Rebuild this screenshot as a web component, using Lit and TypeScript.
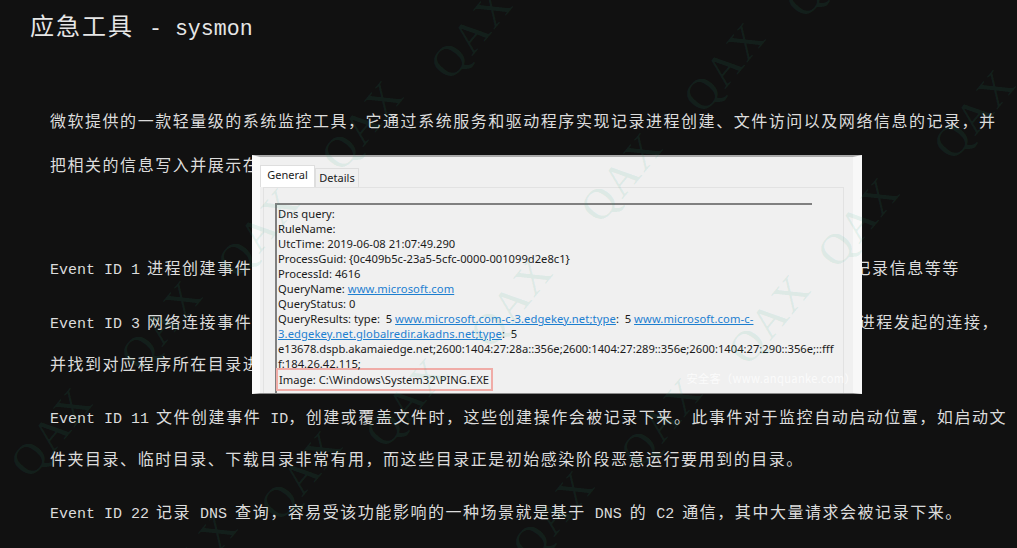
import { LitElement, html, css, svg } from "lit";
import { customElement } from "lit/decorators.js";

const MARKS: [number, number][] = [
  [475, 37], [366, 128], [262, 235], [165, 328], [55, 435], [200, 560],
  [305, 478], [410, 405], [515, 305], [625, 180], [728, 70], [830, -25],
  [978, 117], [862, 225], [773, 322], [665, 425], [557, 518],
];

@customElement("app-root")
export class AppRoot extends LitElement {
  static styles = css`
    :host {
      display: block;
      position: relative;
      height: 548px;
      overflow: hidden;
      background: #111111;
      color: #dcdcdc;
      font-family: "Noto Sans CJK SC", "Liberation Serif", serif;
      font-size: 16px;
      letter-spacing: 1.53px;
    }
    .l {
      font-family: "Liberation Mono", monospace;
      font-size: 15px;
      letter-spacing: 0;
      line-height: 0;
    }
    .tight {
      margin-right: -2px;
    }
    .snug {
      margin-right: -1px;
    }
    h1 {
      margin: 0 0 52px;
      padding: 4px 0 0 30px;
      font-size: 24px;
      font-weight: 400;
      line-height: 42px;
      letter-spacing: 2px;
      white-space: pre;
      color: #e6e6e6;
    }
    h1 .l {
      font-size: 21.6px;
      margin-left: 2px;
    }
    .body {
      padding-left: 50px;
    }
    p {
      margin: 0 0 11px;
      line-height: 42px;
      white-space: pre;
    }
    p.lead {
      line-height: 44px;
      margin-bottom: 60px;
    }
    p.first {
      margin-bottom: 12px;
    }
    .shot {
      position: absolute;
      left: 252px;
      top: 155px;
      width: 610px;
      height: 239px;
      box-sizing: border-box;
      background: #f0f0f0;
      border-top: 2px solid #a9a9a9;
      border-bottom: 1px solid #8a8a8a;
      border-left: 8px solid #fafafa;
      border-right: 9px solid #f8f8f8;
      color: #1a1a1a;
      font-family: "Noto Sans", "Liberation Sans", sans-serif;
      letter-spacing: 0;
      display: flex;
      flex-direction: column;
      overflow: hidden;
    }
    .tabs {
      display: flex;
      align-items: flex-end;
      height: 30px;
      flex: none;
      font-size: 11px;
    }
    .tab {
      box-sizing: border-box;
      height: 19px;
      width: 44px;
      padding-bottom: 2px;
      border: 1px solid #dedede;
      border-bottom: none;
      background: #f0f0f0;
      display: flex;
      align-items: center;
      justify-content: center;
    }
    .tab.on {
      height: 22px;
      width: 55px;
      padding-bottom: 4px;
      background: #ffffff;
    }
    .panel {
      flex: 1;
      margin: 0 9px 0 3px;
      border: 1px solid #e2e2e2;
      border-bottom: none;
      padding: 15px 31px 0 11px;
      min-height: 0;
    }
    .box {
      height: 100%;
      box-sizing: border-box;
      border-top: 2px solid #808080;
      border-left: 2px solid #808080;
      padding: 1px 0 0 1px;
      font-size: 11.2px;
      line-height: 15px;
      white-space: nowrap;
    }
    .link {
      color: #1d7fd0;
      letter-spacing: 0.12px;
      text-decoration: underline;
    }
    .img-line {
      margin: -3px 0 0 -2px;
      width: 217px;
      height: 23px;
      box-sizing: border-box;
      border: 2px solid #f0aca7;
      padding-left: 1px;
      line-height: 19px;
    }
    .credit {
      position: absolute;
      right: -3px;
      bottom: 7px;
      color: rgba(255, 255, 255, 0.75);
      font-family: "Noto Sans CJK SC", sans-serif;
      font-size: 11.2px;
      letter-spacing: 0.3px;
    }
    .marks {
      position: absolute;
      inset: 0;
      width: 100%;
      height: 100%;
      pointer-events: none;
    }
    .marks text {
      font-family: "Liberation Serif", serif;
      font-size: 44px;
      letter-spacing: 2px;
      fill: rgba(40, 170, 130, 0.1);
      text-anchor: middle;
      dominant-baseline: middle;
    }
  `;

  render() {
    return html`
      <h1>应急工具<span class="l"> - sysmon</span></h1>
      <div class="body">
        <p class="lead">微软提供的一款轻量级的系统监控工具，它通过系统服务和驱动程序实现记录进程创建、文件访问以及网络信息的记录，并
把相关的信息写入并展示在事件日志中</p>
        <p class="first"><span class="l tight">Event ID 1 </span>进程创建事件 ID，为新创建的进程提供扩展信息，包括完整命令行、文件哈希值、父进程等记录信息等等</p>
        <p><span class="l tight">Event ID 3 </span>网络连接事件 ID，记录计算机上的 TCP 和 UDP 连接，可以通过它定位到由恶意软件或可疑进程发起的连接，
并找到对应程序所在目录进行分析</p>
        <p><span class="l tight">Event ID 11 </span>文件创建事件<span class="l"> ID</span>，创建或覆盖文件时，这些创建操作会被记录下来。此事件对于监控自动启动位置，如启动文
件夹目录、临时目录、下载目录非常有用，而这些目录正是初始感染阶段恶意运行要用到的目录。</p>
        <p><span class="l tight">Event ID 22 </span>记录<span class="l snug"> DNS </span>查询，容易受该功能影响的一种场景就是基于<span class="l snug"> DNS </span>的<span class="l snug"> C2 </span>通信，其中大量请求会被记录下来。</p>
      </div>
      <div class="shot">
        <div class="tabs">
          <div class="tab on">General</div>
          <div class="tab">Details</div>
        </div>
        <div class="panel">
          <div class="box">
            <div>Dns query:</div>
            <div>RuleName:</div>
            <div>UtcTime: 2019-06-08 21:07:49.290</div>
            <div>ProcessGuid: {0c409b5c-23a5-5cfc-0000-001099d2e8c1}</div>
            <div>ProcessId: 4616</div>
            <div>QueryName: <span class="link">www.microsoft.com</span></div>
            <div>QueryStatus: 0</div>
            <div>QueryResults: type:&nbsp; 5 <span class="link">www.microsoft.com-c-3.edgekey.net;type</span>:&nbsp; 5 <span class="link">www.microsoft.com-c-</span></div>
            <div><span class="link">3.edgekey.net.globalredir.akadns.net;type</span>:&nbsp; 5</div>
            <div>e13678.dspb.akamaiedge.net;2600:1404:27:28a::356e;2600:1404:27:289::356e;2600:1404:27:290::356e;::fff</div>
            <div>f:184.26.42.115;</div>
            <div class="img-line">Image: C:\\Windows\\System32\\PING.EXE</div>
          </div>
        </div>
        <div class="credit">安全客（www.anquanke.com）</div>
      </div>
      <svg class="marks" viewBox="0 0 1017 548" aria-hidden="true">
        ${MARKS.map(([x, y]) => svg`<text transform="translate(${x} ${y}) rotate(-50)">QAX</text>`)}
      </svg>
    `;
  }
}
